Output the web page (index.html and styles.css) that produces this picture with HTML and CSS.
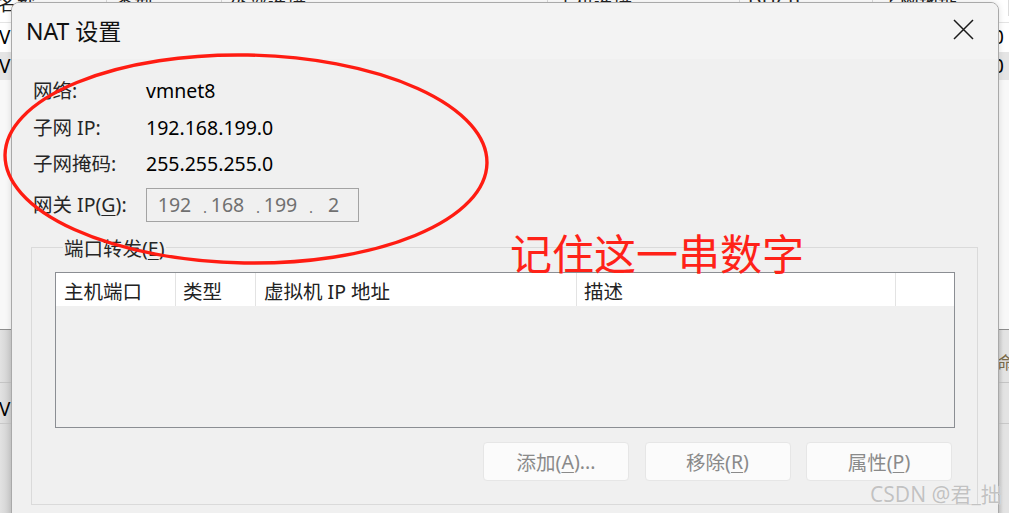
FILE: index.html
```html
<!DOCTYPE html>
<html lang="zh-CN">
<head>
<meta charset="utf-8">
<title>NAT 设置</title>
<link rel="stylesheet" href="styles.css">
</head>
<body>
<div class="backdrop">
  <div class="bg-head">
    <span class="bh c1">名称</span><span class="bh c2">类型</span><span class="bh c3">外部连接</span><span class="bh c4">主机连接</span><span class="bh c5">DHCP</span><span class="bh c6">子网地址</span>
  </div>
  <div class="bg-row"><span class="bg-name">VMnet0</span><span class="bg-addr">192.168.1.0</span></div>
  <div class="bg-row sel"><span class="bg-name">VMnet1</span><span class="bg-addr">192.168.2.0</span></div>
  <div class="bg-fill"></div>
  <div class="bg-lower">
    <div class="bg-tool"><span class="bg-name">VMnet</span><span class="bg-cmd">命令</span></div>
    <div class="bg-row2"><span class="bg-name">VMnet</span></div>
  </div>
</div>

<div class="dialog">
  <div class="titlebar">
    <span class="title">NAT 设置</span>
    <svg class="close" width="21" height="21" viewBox="0 0 21 21"><path d="M1 1 L20 20 M20 1 L1 20" stroke="#1a1a1a" stroke-width="1.5" fill="none"/></svg>
  </div>
  <div class="content">
    <div class="info">
      <div class="row"><span class="label">网络:</span><span class="value">vmnet8</span></div>
      <div class="row"><span class="label">子网 IP:</span><span class="value">192.168.199.0</span></div>
      <div class="row"><span class="label">子网掩码:</span><span class="value">255.255.255.0</span></div>
      <div class="row gw"><span class="label">网关 IP(<u>G</u>):</span>
        <div class="ipbox"><span class="oct">192</span><span class="dot">.</span><span class="oct">168</span><span class="dot">.</span><span class="oct">199</span><span class="dot">.</span><span class="oct">2</span></div>
      </div>
    </div>
    <div class="group">
      <div class="group-head"><span class="group-title">端口转发(<u>E</u>)</span></div>
      <div class="table">
        <div class="thead">
          <span class="th w1">主机端口</span><span class="th w2">类型</span><span class="th w3">虚拟机 IP 地址</span><span class="th w4">描述</span><span class="th w5"></span>
        </div>
      </div>
      <div class="buttons">
        <span class="btn">添加(<u>A</u>)...</span>
        <span class="btn">移除(<u>R</u>)</span>
        <span class="btn">属性(<u>P</u>)</span>
      </div>
    </div>
  </div>
</div>

<svg class="marks" width="1009" height="513" viewBox="0 0 1009 513">
  <ellipse cx="246" cy="159" rx="241" ry="104" transform="rotate(1 246 159)" fill="none" stroke="#ff1c12" stroke-width="3.4"/>
</svg>
<div class="note">记住这一串数字</div>
<div class="watermark">CSDN @君_拙</div>
</body>
</html>
```
FILE: styles.css
```css
html, body {
  margin: 0;
  padding: 0;
  width: 1009px;
  height: 513px;
  overflow: hidden;
}
body {
  position: relative;
  font-family: "Noto Sans", "Noto Sans CJK SC", sans-serif;
  background: #ffffff;
  color: #000;
}

/* ---------- backdrop window ---------- */
.backdrop {
  height: 513px;
  display: flex;
  flex-direction: column;
  font-size: 19px;
}
.bg-head {
  height: 30px;
  margin-top: -8px;
  border-bottom: 1px solid #e4e4e4;
  display: flex;
  align-items: flex-start;
}
.bh {
  height: 24px;
  line-height: 24px;
  padding-left: 8px;
  border-right: 1px solid #dcdcdc;
  color: #222;
}
.c1 { width: 108px; margin-left: -10px; }
.c2 { width: 106px; }
.c3 { width: 317px; }
.c4 { width: 183px; }
.c5 { width: 124px; }
.c6 { flex: 1; }
.bg-row {
  height: 29px;
  line-height: 29px;
  display: flex;
  justify-content: space-between;
  padding-right: 5px;
}
.bg-row.sel { background: #e5e5e5; height: 28px; line-height: 28px; }
.bg-name { margin-left: -1px; }
.bg-fill { height: 249px; background: #f8f8f8; }
.bg-lower {
  flex: 1;
  border-top: 1px solid #8d8d8d;
  background: linear-gradient(90deg, #e2e2e2 0px, #cdcdcd 12px, #dcdcdc 14px, #e9e9e9 997px, #cfcfcf 999px, #e3e3e3 1003px);
  display: flex;
  flex-direction: column;
}
.bg-tool {
  height: 53px;
  display: flex;
  justify-content: space-between;
  align-items: center;
  padding-top: 10px;
  box-sizing: border-box;
  border-bottom: 1px solid #c4c4c4;
  color: #7a6a4a;
  font-size: 17px;
}
.bg-tool .bg-name { visibility: hidden; }
.bg-cmd { margin-right: -22px; }
.bg-row2 {
  height: 28px;
  line-height: 28px;
  margin-top: 12px;
  border-bottom: 1px solid #c8c8c8;
}

/* ---------- dialog ---------- */
.dialog {
  position: absolute;
  left: 11px;
  top: 2px;
  width: 988px;
  height: 540px;
  box-sizing: border-box;
  border: 1px solid #a9a9a9;
  border-radius: 8px 8px 0 0;
  background: #f0f0f0;
  overflow: hidden;
  box-shadow: 0 0 6px rgba(0,0,0,0.12);
  font-size: 19.5px;
  color: #000;
}
.titlebar {
  height: 56px;
  background: #f3f3f3;
  display: flex;
  align-items: center;
  justify-content: space-between;
  padding: 0 24px 0 14px;
}
.title {
  font-size: 23px;
  color: #111;
  padding-bottom: 2px;
}
.close { display: block; margin-bottom: 4px; }

.content {
  padding: 0 20px 0 19px;
}
.info {
  padding: 19px 0 0 2px;
  display: flex;
  flex-direction: column;
  gap: 10.5px;
}
.row {
  display: flex;
  align-items: center;
  height: 26px;
  line-height: 26px;
}
.row.gw { height: 34px; }
.label {
  width: 113px;
  color: #262626;
}
.value { color: #000; }
u { text-decoration-thickness: 1px; text-underline-offset: 3px; }

.ipbox {
  width: 213px;
  height: 34px;
  box-sizing: border-box;
  border: 1px solid #a3a3a3;
  display: flex;
  align-items: center;
  padding-left: 7px;
  color: #707070;
}
.oct { width: 41px; text-align: center; }
.dot { width: 12px; text-align: right; font-size: 15px; padding-top: 4px; box-sizing: border-box; }

.group {
  margin-top: 25px;
  border: 1px solid #dadada;
  padding: 0 22px 23px 23px;
}
.group-head { height: 13px; margin-top: -13px; }
.group-title {
  display: inline-block;
  margin-left: 8px;
  padding: 0 1px;
  line-height: 24px;
  background: #f0f0f0;
  color: #262626;
}
.table {
  margin-top: 24px;
  height: 156px;
  box-sizing: border-box;
  border: 1px solid #8b8e93;
  background: #f0f0f0;
}
.thead {
  display: flex;
  height: 33px;
  background: #ffffff;
}
.th {
  box-sizing: border-box;
  height: 33px;
  line-height: 32px;
  padding-top: 3px;
  padding-left: 8px;
  border-right: 1px solid #e3e3e3;
  color: #222;
  white-space: nowrap;
}
.w1 { width: 120px; }
.w2 { width: 80px; padding-left: 7px; }
.w3 { width: 321px; }
.w4 { width: 319px; padding-left: 7px; }
.w5 { flex: 1; border-right: none; }

.buttons {
  display: flex;
  justify-content: flex-end;
  gap: 15.5px;
  margin-top: 14px;
  margin-right: 3px;
}
.btn {
  width: 146px;
  height: 39px;
  box-sizing: border-box;
  border: 1px solid #e6e6e6;
  border-radius: 4px;
  background: #fbfbfb;
  display: flex;
  align-items: center;
  justify-content: center;
  color: #8a8a8a;
}

/* ---------- annotations ---------- */
.marks {
  position: absolute;
  left: 0;
  top: 0;
  pointer-events: none;
}
.note {
  position: absolute;
  left: 510px;
  top: 225px;
  font-size: 42px;
  line-height: 54px;
  color: #ff2218;
  font-family: "Noto Sans CJK SC", sans-serif;
  white-space: nowrap;
}
.watermark {
  position: absolute;
  left: 870px;
  top: 481px;
  font-size: 21px;
  line-height: 26px;
  color: #c2c2c2;
  white-space: nowrap;
  text-shadow: 0 0 1px #fff;
}
```
